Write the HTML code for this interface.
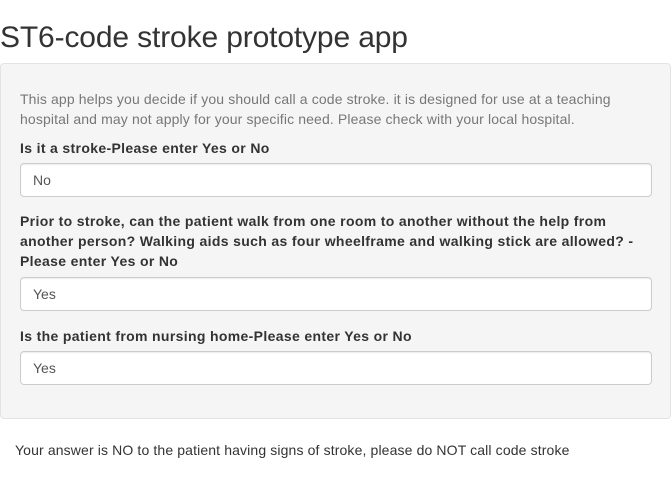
<!DOCTYPE html>
<html><head><style>
body{margin:0;font-family:"Liberation Sans",Arial,sans-serif;font-size:14px;color:#333;background:#fff;width:672px;height:480px;overflow:hidden;position:relative}
h2{position:absolute;left:0;top:18px;margin:0;font-size:30px;font-weight:normal;line-height:40px;color:#333;letter-spacing:-0.14px}
.panel{position:absolute;left:0;top:63px;width:671px;height:356px;background:#f5f5f5;border:1px solid #e3e3e3;border-radius:4px;box-sizing:border-box}
.t{position:absolute;left:20px;line-height:20px;letter-spacing:0.13px;white-space:nowrap}
.desc{color:#777;top:89px}
.lbl{font-weight:bold;letter-spacing:0.34px}
.in{position:absolute;left:20px;width:632px;height:34px;background:#fff;border:1px solid #ccc;border-radius:4px;box-sizing:border-box;padding:6px 12px;line-height:20px;color:#555;box-shadow:inset 0 1px 1px rgba(0,0,0,.075)}
</style></head><body>
<h2>ST6-code stroke prototype app</h2>
<div class="panel"></div>
<div class="t desc">This app helps you decide if you should call a code stroke. it is designed for use at a teaching<br>hospital and may not apply for your specific need. Please check with your local hospital.</div>
<div class="t lbl" style="top:138px">Is it a stroke-Please enter Yes or No</div>
<div class="in" style="top:163px">No</div>
<div class="t lbl" style="top:211px">Prior to stroke, can the patient walk from one room to another without the help from<br>another person? Walking aids such as four wheelframe and walking stick are allowed? -<br>Please enter Yes or No</div>
<div class="in" style="top:277px">Yes</div>
<div class="t lbl" style="top:326px">Is the patient from nursing home-Please enter Yes or No</div>
<div class="in" style="top:351px">Yes</div>
<div class="t" style="left:15px;top:440px">Your answer is NO to the patient having signs of stroke, please do NOT call code stroke</div>
</body></html>
